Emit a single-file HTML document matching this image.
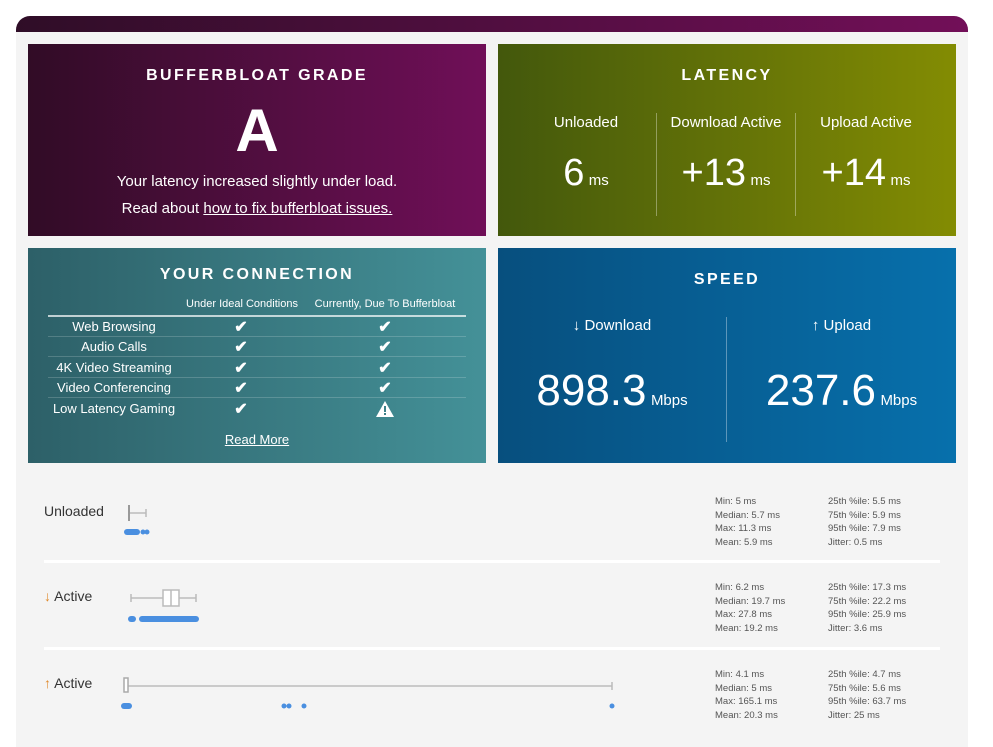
<!DOCTYPE html>
<html><head><meta charset="utf-8"><style>
*{margin:0;padding:0;box-sizing:border-box}
body{width:993px;height:747px;background:#fff;font-family:"Liberation Sans",sans-serif;position:relative;overflow:hidden;color:#fff}
.a{position:absolute}
.c{text-align:center}
#bar{left:16px;top:16px;width:952px;height:16px;border-radius:14px 14px 0 0;background:linear-gradient(90deg,#2f0d27,#720f58)}
#bg{left:16px;top:32px;width:952px;height:715px;background:#f4f4f4}
.p{position:absolute}
#g{left:28px;top:44px;width:458px;height:192px;background:linear-gradient(90deg,#310c26,#700f58)}
#l{left:498px;top:44px;width:458px;height:192px;background:linear-gradient(90deg,#43580c,#838c03)}
#y{left:28px;top:248px;width:458px;height:215px;background:linear-gradient(90deg,#2d6068,#449198)}
#s{left:498px;top:248px;width:458px;height:215px;background:linear-gradient(90deg,#074f7e,#0770ac)}
.h{font-weight:bold;font-size:16px;letter-spacing:2.4px;width:100%;text-align:center;position:absolute}
.t{font-size:15px}
.v{font-size:38px}
.u{font-size:15px}
.row{position:absolute;left:20px;width:418px;height:20px;border-bottom:1px solid rgba(255,255,255,.18);font-size:13px}
.row span{position:absolute;top:2px;text-align:center}
.row b{position:absolute;top:0;font-size:16px;width:20px;text-align:center}
.st{position:absolute;font-size:9.5px;color:#555;line-height:13.6px}
.lab{position:absolute;left:44px;font-size:14px;color:#333}
.sep{position:absolute;left:44px;width:896px;height:3px;background:#fff}
</style></head><body>
<div class="a" id="bar"></div>
<div class="a" id="bg"></div>

<div class="p" id="g">
 <div class="h" style="top:23px">BUFFERBLOAT GRADE</div>
 <div class="a c" style="top:52px;width:100%;font-size:60px;font-weight:bold">A</div>
 <div class="a c t" style="top:129px;width:100%;font-size:15px">Your latency increased slightly under load.</div>
 <div class="a c t" style="top:156px;width:100%;font-size:15px">Read about <u>how to fix bufferbloat issues.</u></div>
</div>

<div class="p" id="l">
 <div class="h" style="top:23px">LATENCY</div>
 <div class="a" style="left:158px;top:69px;width:1px;height:103px;background:rgba(255,255,255,.35)"></div>
 <div class="a" style="left:297px;top:69px;width:1px;height:103px;background:rgba(255,255,255,.35)"></div>
 <div class="a c t" style="left:18px;top:70px;width:140px">Unloaded</div>
 <div class="a c t" style="left:158px;top:70px;width:140px">Download Active</div>
 <div class="a c t" style="left:298px;top:70px;width:140px">Upload Active</div>
 <div class="a c" style="left:18px;top:108px;width:140px"><span class="v">6</span> <span class="u">ms</span></div>
 <div class="a c" style="left:158px;top:108px;width:140px"><span class="v">+13</span> <span class="u">ms</span></div>
 <div class="a c" style="left:298px;top:108px;width:140px"><span class="v">+14</span> <span class="u">ms</span></div>
</div>

<div class="p" id="y">
 <div class="h" style="top:18px">YOUR CONNECTION</div>
 <div class="a" style="left:153px;top:50px;font-size:11px;width:122px;text-align:center">Under Ideal Conditions</div>
 <div class="a" style="left:281px;top:50px;font-size:11px;width:152px;text-align:center">Currently, Due To Bufferbloat</div>
 <div class="a" style="left:20px;top:67px;width:418px;height:2px;background:rgba(255,255,255,.7)"></div>
 <div class="row" style="top:69px"><span style="left:0;width:132px">Web Browsing</span><b style="left:183px">✔</b><b style="left:327px">✔</b></div>
 <div class="row" style="top:89px"><span style="left:0;width:132px">Audio Calls</span><b style="left:183px">✔</b><b style="left:327px">✔</b></div>
 <div class="row" style="top:110px"><span style="left:0;width:132px">4K Video Streaming</span><b style="left:183px">✔</b><b style="left:327px">✔</b></div>
 <div class="row" style="top:130px"><span style="left:0;width:132px">Video Conferencing</span><b style="left:183px">✔</b><b style="left:327px">✔</b></div>
 <div class="row" style="top:151px;border:none"><span style="left:0;width:132px">Low Latency Gaming</span><b style="left:183px">✔</b>
  <svg style="position:absolute;left:328px;top:2px" width="18" height="16" viewBox="0 0 18 16"><path d="M9 0L18 16H0Z" fill="#fff"/><rect x="8" y="5" width="2" height="6" fill="#3d8189"/><rect x="8" y="12" width="2" height="2" fill="#3d8189"/></svg></div>
 <div class="a c" style="top:184px;width:100%;font-size:13px"><u>Read More</u></div>
</div>

<div class="p" id="s">
 <div class="h" style="top:23px">SPEED</div>
 <div class="a" style="left:228px;top:69px;width:1px;height:125px;background:rgba(255,255,255,.35)"></div>
 <div class="a c t" style="left:0;top:69px;width:228px">↓ Download</div>
 <div class="a c t" style="left:229px;top:69px;width:229px">↑ Upload</div>
 <div class="a c" style="left:0;top:118px;width:228px"><span style="font-size:44px">898.3</span> <span class="u">Mbps</span></div>
 <div class="a c" style="left:229px;top:118px;width:229px"><span style="font-size:44px">237.6</span> <span class="u">Mbps</span></div>
</div>

<div class="lab" style="top:503px">Unloaded</div>
<div class="lab" style="top:588px"><span style="color:#e08a2c">↓</span> Active</div>
<div class="lab" style="top:675px"><span style="color:#e08a2c">↑</span> Active</div>
<div class="sep" style="top:560px"></div>
<div class="sep" style="top:647px"></div>

<svg class="a" style="left:0;top:0" width="993" height="747">
 <g stroke="#bbb" stroke-width="1.5" fill="none">
  <line x1="128" y1="513" x2="146" y2="513"/><line x1="146" y1="509" x2="146" y2="517"/>
  <line x1="129" y1="505" x2="129" y2="521" stroke="#999" stroke-width="2"/>
  <line x1="131" y1="598" x2="196" y2="598"/><line x1="131" y1="594" x2="131" y2="602"/><line x1="196" y1="594" x2="196" y2="602"/>
  <rect x="163" y="590" width="16" height="16" fill="#fff"/><line x1="171" y1="590" x2="171" y2="606"/>
  <line x1="126" y1="686" x2="612" y2="686"/><line x1="612" y1="682" x2="612" y2="690"/>
  <rect x="124" y="678" width="4" height="14" fill="#fff" stroke="#aaa"/>
 </g>
 <g fill="#4a8fe0">
  <rect x="124" y="529" width="16" height="6" rx="3"/><circle cx="143" cy="532" r="2.5"/><circle cx="147" cy="532" r="2.5"/>
  <rect x="128" y="616" width="8" height="6" rx="3"/><rect x="139" y="616" width="60" height="6" rx="3"/>
  <rect x="121" y="703" width="11" height="6" rx="3"/><circle cx="284" cy="706" r="2.5"/><circle cx="289" cy="706" r="2.5"/><circle cx="304" cy="706" r="2.5"/><circle cx="612" cy="706" r="2.5"/>
 </g>
</svg>

<div class="st" style="left:715px;top:495px">Min: 5 ms<br>Median: 5.7 ms<br>Max: 11.3 ms<br>Mean: 5.9 ms</div>
<div class="st" style="left:828px;top:495px">25th %ile: 5.5 ms<br>75th %ile: 5.9 ms<br>95th %ile: 7.9 ms<br>Jitter: 0.5 ms</div>
<div class="st" style="left:715px;top:581px">Min: 6.2 ms<br>Median: 19.7 ms<br>Max: 27.8 ms<br>Mean: 19.2 ms</div>
<div class="st" style="left:828px;top:581px">25th %ile: 17.3 ms<br>75th %ile: 22.2 ms<br>95th %ile: 25.9 ms<br>Jitter: 3.6 ms</div>
<div class="st" style="left:715px;top:668px">Min: 4.1 ms<br>Median: 5 ms<br>Max: 165.1 ms<br>Mean: 20.3 ms</div>
<div class="st" style="left:828px;top:668px">25th %ile: 4.7 ms<br>75th %ile: 5.6 ms<br>95th %ile: 63.7 ms<br>Jitter: 25 ms</div>
</body></html>
